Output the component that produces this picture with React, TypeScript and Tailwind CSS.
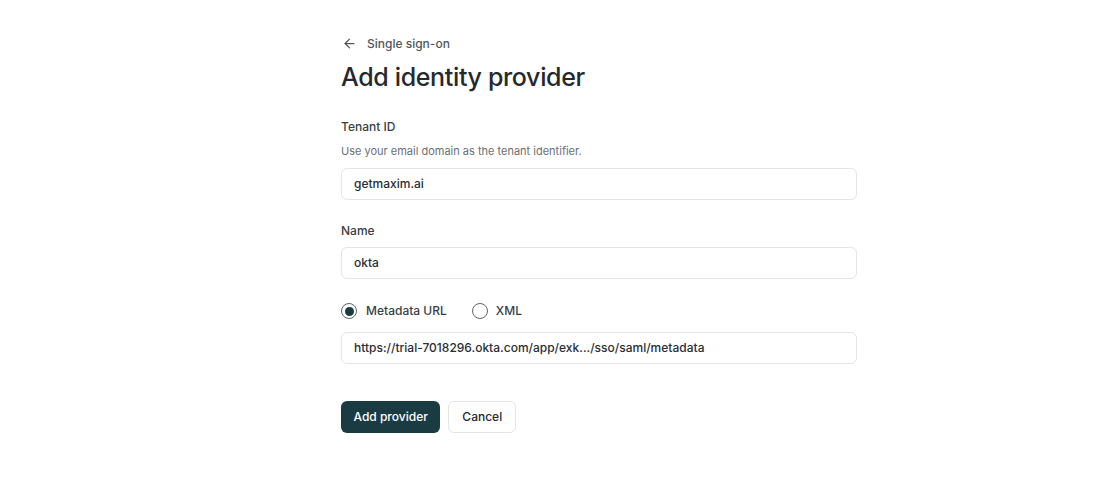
import React from "react";

export default function App() {
  return (
    <div
      className="min-h-[479px] w-[1120px] bg-white text-[#1f2328]"
      style={{ fontFamily: "Inter, 'Noto Sans', sans-serif" }}
    >
      <div className="ml-[341px] w-[516px] pt-[33px]">
        <div className="flex h-5 items-center gap-[10px] text-[12px] font-medium text-[#52575c]">
          <svg width="15" height="15" viewBox="0 0 24 24" fill="none" stroke="#52575c" strokeWidth="2" strokeLinecap="round" strokeLinejoin="round" className="ml-[1px] mt-[1px]">
            <path d="M19 12H5" />
            <path d="M12 19l-7-7 7-7" />
          </svg>
          <span className="mt-[1px]">Single sign-on</span>
        </div>
        <h1 className="mt-[8px] text-[25px] font-medium leading-[32px] tracking-[-0.35px] text-[#26292c]">
          Add identity provider
        </h1>

        <div className="mt-[26px] text-[12px] font-medium leading-[16px] text-[#3a3f44]">Tenant ID</div>
        <div className="mt-[8px] text-[11px] leading-[16px] text-[#6b7075]">
          Use your email domain as the tenant identifier.
        </div>
        <div className="mt-[9px] flex h-[32px] items-center rounded-[6px] border border-[#e3e5e8] px-[12px] text-[12px] font-medium text-[#2a2e33]">
          getmaxim.ai
        </div>

        <div className="mt-[23px] text-[12px] font-medium leading-[16px] text-[#3a3f44]">Name</div>
        <div className="mt-[8px] flex h-[32px] items-center rounded-[6px] border border-[#e3e5e8] px-[12px] text-[12px] font-medium text-[#2a2e33]">
          okta
        </div>

        <div className="mt-[22px] flex h-5 items-center text-[12px] font-medium text-[#3a3f44]">
          <div className="flex items-center gap-[9px]">
            <span className="flex h-[16px] w-[16px] items-center justify-center rounded-full border-[1.5px] border-[#5b6468]">
              <span className="h-[9px] w-[9px] rounded-full bg-[#1b3b42]" />
            </span>
            <span>Metadata URL</span>
          </div>
          <div className="ml-[25px] flex items-center gap-[8px]">
            <span className="h-[16px] w-[16px] rounded-full border-[1.5px] border-[#5b6468]" />
            <span>XML</span>
          </div>
        </div>
        <div className="mt-[11px] flex h-[32px] items-center rounded-[6px] border border-[#e3e5e8] px-[12px] text-[12px] font-medium text-[#2a2e33]">
          https://trial-7018296.okta.com/app/exk.../sso/saml/metadata
        </div>

        <div className="mt-[37px] flex gap-[8px]">
          <button className="h-[32px] rounded-[6px] bg-[#1b3b42] px-[12.5px] text-[12px] font-medium text-white">
            Add provider
          </button>
          <button className="h-[32px] rounded-[6px] border border-[#e3e5e8] bg-white px-[13px] text-[12px] font-medium text-[#26292c]">
            Cancel
          </button>
        </div>
      </div>
    </div>
  );
}
